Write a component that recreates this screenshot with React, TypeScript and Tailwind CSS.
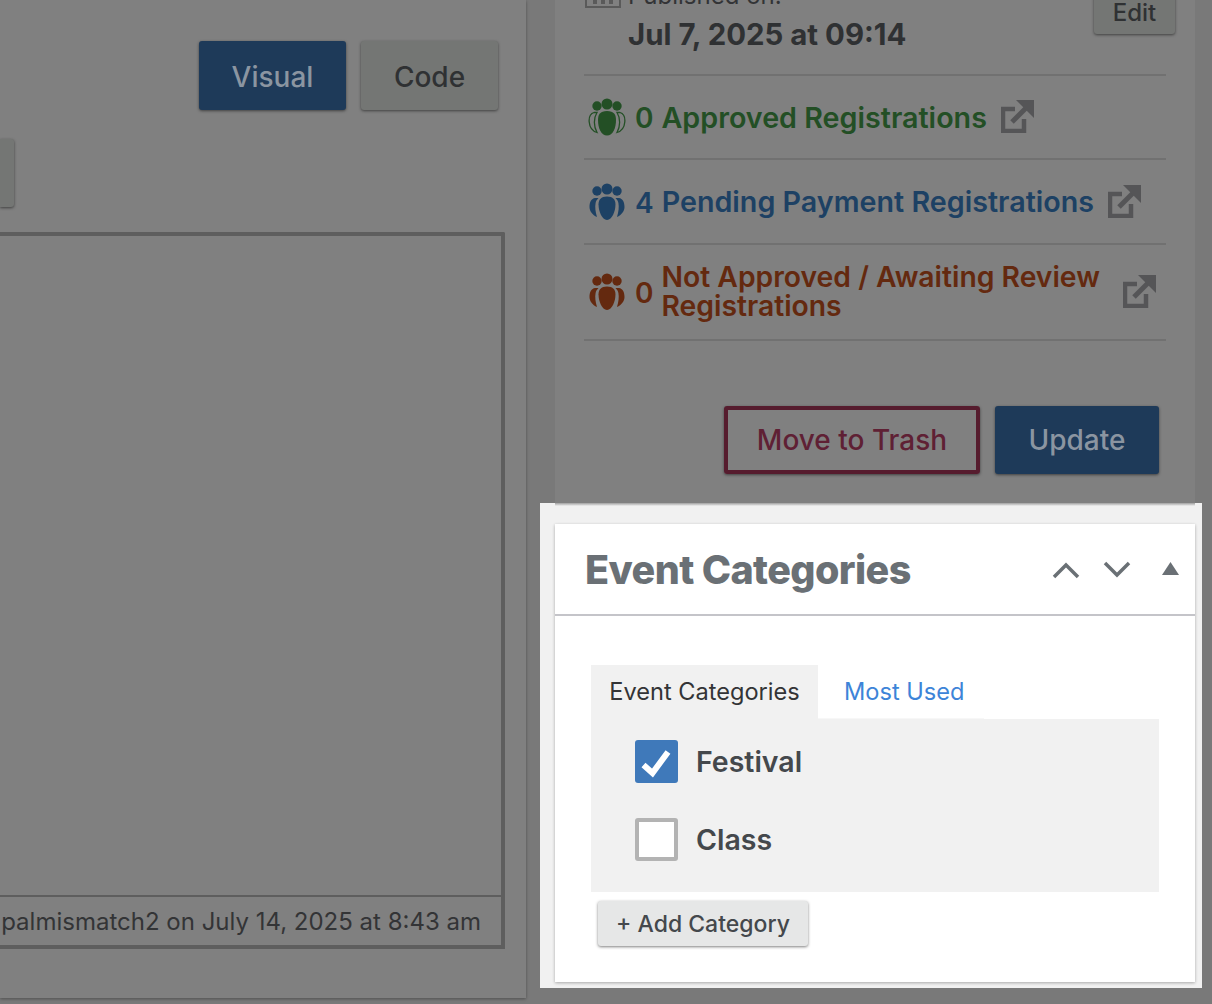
import React from "react";

const font = { fontFamily: "Inter, 'Liberation Sans', sans-serif" };

function People({ color, outlined }: { color: string; outlined?: boolean }) {
  return (
    <svg width="38" height="38" viewBox="0 0 38 38" className="shrink-0">
      <circle cx="9" cy="8" r="4.7" fill={color} />
      <circle cx="29" cy="8" r="4.7" fill={color} />
      <circle cx="19" cy="6" r="5.5" fill={color} />
      {outlined ? (
        <>
          <path d="M6 14.5C2.5 15.5 0.8 19 1.2 24C1.6 28.5 4 33 9 34.5C5.5 28 5.5 20 9 14.5Z" fill="none" stroke={color} strokeWidth="1.3" />
          <path d="M32 14.5C35.5 15.5 37.2 19 36.8 24C36.4 28.5 34 33 29 34.5C32.5 28 32.5 20 29 14.5Z" fill="none" stroke={color} strokeWidth="1.3" />
          <path d="M19 13C12 13 10 16.5 10 22C10 30 13 37.5 19 37.5C25 37.5 28 30 28 22C28 16.5 26 13 19 13Z" fill={color} />
        </>
      ) : (
        <>
          <path d="M7 15C3.5 15.5 1.5 19 1.5 24C1.5 28 4.5 32 9 34C7.5 29 6.8 24 7.6 20C8 18 9 16.5 10.5 15Z" fill={color} />
          <path d="M31 15C34.5 15.5 36.5 19 36.5 24C36.5 28 33.5 32 29 34C30.5 29 31.2 24 30.4 20C30 18 29 16.5 27.5 15Z" fill={color} />
          <path d="M19 13.5C13 13.5 10.5 16.5 10.5 21.5C10.5 28 14 37 19 37C24 37 27.5 28 27.5 21.5C27.5 16.5 25 13.5 19 13.5Z" fill={color} />
        </>
      )}
    </svg>
  );
}

function ExternalLink() {
  return (
    <svg width="33" height="33" viewBox="0 0 33 33" className="-mt-[1px] shrink-0">
      <path d="M14 9H2V31H23V19" fill="none" stroke="#555557" strokeWidth="4.5" />
      <path d="M11 22L26 7" stroke="#555557" strokeWidth="5" fill="none" />
      <path d="M15 0H33V18L27 12L21 6Z" fill="#555557" />
    </svg>
  );
}

function RegRow({
  color,
  outlined,
  count,
  label,
  h,
  gap,
  labelClass,
}: {
  color: string;
  outlined?: boolean;
  count: string;
  label: React.ReactNode;
  h: string;
  gap: string;
  labelClass: string;
}) {
  return (
    <div className={`flex items-center border-b-2 border-[#717171] pl-[4px] ${h}`}>
      <People color={color} outlined={outlined} />
      <span className="ml-[9px] shrink-0 pt-[2px] text-[28px] font-semibold leading-none" style={{ color }}>
        {count}
      </span>
      <span className={`ml-[8px] font-semibold leading-[29px] ${labelClass}`} style={{ color }}>
        {label}
      </span>
      <span className={gap}>
        <ExternalLink />
      </span>
    </div>
  );
}

export default function App() {
  return (
    <div style={font} className="flex h-[1004px] w-[1212px] overflow-hidden bg-[#797979]">
      {/* Left column */}
      <div className="flex h-[998px] w-[526px] shrink-0 flex-col bg-[#808080] shadow-[0_1px_3px_rgba(0,0,0,0.35)]">
        <div className="flex justify-end gap-[15px] pr-[28px] pt-[41px]">
          <button className="h-[69px] w-[147px] rounded-[3px] bg-[#1e3a59] pt-[2px] text-[28px] font-medium text-[#8b95a1] shadow-[0_1px_3px_rgba(0,0,0,0.5)]">
            Visual
          </button>
          <button className="h-[69px] w-[137px] rounded-[3px] bg-[#747674] pt-[2px] text-[28px] font-medium text-[#2f3133] shadow-[0_1px_3px_rgba(0,0,0,0.5)]">
            Code
          </button>
        </div>
        <div className="mt-[29px] h-[68px] w-[14px] rounded-r-[3px] bg-[#747674] shadow-[0_1px_3px_rgba(0,0,0,0.5)]" />
        <div className="mt-[25px] flex h-[717px] w-[505px] flex-col rounded-tr-[2px] border-y-4 border-r-4 border-[#5e5e5e]">
          <div className="flex-1" />
          <div className="flex h-[50px] items-center justify-end overflow-hidden border-t-2 border-[#5e5e5e] pr-[20px] pt-[2px] text-[24px] text-[#333436]">
            palmismatch2 on July 14, 2025 at 8:43 am
          </div>
        </div>
      </div>

      {/* Right column */}
      <div className="ml-[29px] flex w-[640px] shrink-0 flex-col">
        <div className="flex h-[503px] flex-col bg-[#808080] pl-[29px] pr-[29px]">
          <div className="relative h-[76px] border-b-2 border-[#717171]">
            <svg width="36" height="8" viewBox="0 0 36 8" className="absolute left-[1px] top-0">
              <path d="M1 0V7H35V0" fill="none" stroke="#5a5a5a" strokeWidth="2" />
              <path d="M8 0h4v4H8zM16 0h4v4h-4zM24 0h4v4h-4z" fill="#5a5a5a" />
            </svg>
            <span className="absolute left-[44px] top-[-18px] text-[24px] leading-[28px] text-[#333436]">
              Published on:
            </span>
            <span className="absolute left-[44px] top-[17px] text-[29.4px] font-bold leading-[36px] text-[#2f3133]">
              Jul 7, 2025 at 09:14
            </span>
            <button className="absolute right-[-9px] top-[-10px] flex h-[44px] w-[81px] items-center justify-center rounded-[3px] bg-[#747674] pt-[2px] text-[24px] font-medium text-[#2f3133] shadow-[0_1px_3px_rgba(0,0,0,0.5)]">
              Edit
            </button>
          </div>
          <RegRow h="h-[84px]" color="#234f25" outlined count="0" label="Approved Registrations" gap="ml-[14px]" labelClass="text-[28.7px]" />
          <RegRow h="h-[85px]" color="#1d4164" count="4" label="Pending Payment Registrations" gap="ml-[14px]" labelClass="text-[28.7px]" />
          <RegRow
            h="h-[96px]"
            color="#64290f"
            count="0"
            label={
              <>
                Not Approved / Awaiting Review
                <br />
                Registrations
              </>
            }
            gap="ml-[23px]"
            labelClass="text-[28.3px]"
          />
          <div className="flex justify-end gap-[15px] pr-[7px] pt-[65px]">
            <button className="h-[68px] w-[256px] rounded-[3px] border-4 border-[#561c2e] text-[28px] font-medium text-[#5f2034] shadow-[0_1px_3px_rgba(0,0,0,0.5)]">
              Move to Trash
            </button>
            <button className="h-[68px] w-[164px] rounded-[3px] bg-[#1e3a59] text-[28px] font-medium text-[#8b95a1] shadow-[0_1px_3px_rgba(0,0,0,0.5)]">
              Update
            </button>
          </div>
        </div>

        {/* Spotlight */}
        <div className="-ml-[15px] h-[485px] w-[662px] bg-[#f1f1f1] pl-[15px] pr-[7px]">
          <div className="h-[3px] w-[640px] bg-gradient-to-b from-[#a0a0a0] to-[#f1f1f1]" />
          <div className="mt-[18px] h-[458px] w-[640px] bg-white shadow-[0_1px_3px_rgba(0,0,0,0.3)]">
            <div className="flex h-[92px] items-center border-b-2 border-[#c4c4c9] pl-[30px] pr-[16px]">
              <span className="flex-1 pt-[3px] text-[39.5px] font-extrabold tracking-[-0.6px] text-[#6a7075]">Event Categories</span>
              <svg width="30" height="20" viewBox="0 0 30 20" className="mr-[21px] mt-[2px]">
                <path d="M3 17L15 5L27 17" fill="none" stroke="#6a7075" strokeWidth="3.5" />
              </svg>
              <svg width="30" height="20" viewBox="0 0 30 20" className="mr-[30px] mt-[2px]">
                <path d="M3 3L15 15L27 3" fill="none" stroke="#6a7075" strokeWidth="3.5" />
              </svg>
              <svg width="17" height="14" viewBox="0 0 17 14">
                <path d="M8.5 0L17 13H0Z" fill="#6a7075" />
              </svg>
            </div>
            <div className="pl-[36px] pt-[49px]">
              <div className="flex h-[54px] w-[568px] items-stretch">
                <div className="flex h-[54px] w-[227px] items-center justify-center bg-[#f1f1f1] text-[23.6px] text-[#333436]">
                  Event Categories
                </div>
                <div className="flex h-[54px] w-[166px] items-center border-b border-[#f7f7f7] pl-[26px] text-[23.6px] text-[#3d84d8]">
                  Most Used
                </div>
              </div>
              <div className="flex h-[173px] w-[568px] flex-col bg-[#f1f1f1] pl-[44px] pt-[21px]">
                <div className="flex h-[43px] items-center">
                  <span className="h-[43px] w-[43px] rounded-[3px] bg-[#3f79ba]">
                    <svg width="43" height="43" viewBox="0 0 43 43">
                      <path d="M8.5 25L17.5 33L33 12" fill="none" stroke="#ffffff" strokeWidth="6" />
                    </svg>
                  </span>
                  <span className="ml-[18px] pt-[2px] text-[28.5px] font-semibold text-[#44484c]">Festival</span>
                </div>
                <div className="mt-[35px] flex h-[43px] items-center">
                  <span className="h-[43px] w-[43px] rounded-[3px] border-4 border-[#b3b3b3] bg-white" />
                  <span className="ml-[18px] pt-[2px] text-[28.5px] font-semibold text-[#44484c]">Class</span>
                </div>
              </div>
              <button className="ml-[7px] mt-[9px] h-[45px] w-[210px] rounded-[3px] bg-[#e6e7e7] pt-[2px] text-[23px] font-medium text-[#44484c] shadow-[0_1px_3px_rgba(0,0,0,0.5)]">
                + Add Category
              </button>
            </div>
          </div>
        </div>
      </div>
    </div>
  );
}
